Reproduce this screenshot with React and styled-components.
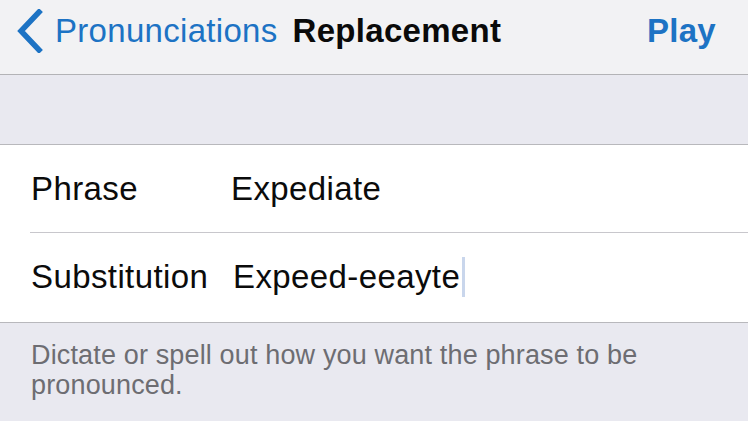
import styled, { createGlobalStyle } from "styled-components";

const GlobalStyle = createGlobalStyle`
    html, body {
        margin: 0;
        padding: 0;
        background-color: #e9e9f0;
    }
    body {
        font-family: "Liberation Sans", Arial, sans-serif;
        -webkit-font-smoothing: antialiased;
    }
`;

const Screen = styled.div`
    width: 748px;
    height: 421px;
    overflow: hidden;
    background-color: #e9e9f0;
    display: flex;
    flex-direction: column;
`;

const NavBar = styled.div`
    height: 75px;
    box-sizing: border-box;
    flex-shrink: 0;
    display: flex;
    align-items: center;
    padding: 0 32px 13px 16px;
    background-color: #f2f2f4;
    border-bottom: 1px solid #b3b3b6;
    font-size: 33px;
    letter-spacing: 0.3px;
`;

const BackButton = styled.div`
    display: flex;
    align-items: center;
    gap: 12px;
    color: #1d73c4;
`;

const Title = styled.div`
    margin-left: 15px;
    font-weight: bold;
    color: #0a0a0a;
    flex: 1;
`;

const Action = styled.div`
    font-weight: bold;
    color: #1d73c4;
`;

const Spacer = styled.div`
    height: 69px;
    flex-shrink: 0;
    border-bottom: 1px solid #b8b8bc;
`;

const Group = styled.div`
    background-color: #ffffff;
    padding-bottom: 1px;
    border-bottom: 1px solid #b8b8bc;
`;

const Row = styled.div`
    height: 88px;
    display: flex;
    align-items: center;
    padding-left: 31px;
    font-size: 33px;
    letter-spacing: 0.4px;
    color: #0b0b0b;
    position: relative;
    ${(props) =>
        props.divided &&
        `
        &::after {
            content: "";
            position: absolute;
            left: 30px;
            right: 0;
            bottom: 0;
            height: 1px;
            background-color: #c8c7cc;
        }
    `}
`;

const Label = styled.div`
    width: 200px;
    flex-shrink: 0;
`;

const Value = styled.div`
    display: flex;
    align-items: center;
    padding-left: ${(props) => props.offset || 0}px;
`;

const Caret = styled.span`
    display: inline-block;
    width: 3px;
    height: 40px;
    margin-left: 2px;
    background-color: #c9d6ec;
`;

const Footer = styled.div`
    padding: 17px 40px 0 31px;
    font-size: 27px;
    line-height: 30px;
    color: #6d6d72;
    letter-spacing: 0.15px;
`;

function Chevron() {
    return (
        <svg width="27" height="44" viewBox="0 0 27 44">
            <path d="M23 3 L5 22 L23 41" fill="none" stroke="#1d73c4" strokeWidth="5.5" strokeLinecap="square" />
        </svg>
    );
}

export default function App() {
    return (
        <Screen>
            <GlobalStyle />
            <NavBar>
                <BackButton>
                    <Chevron />
                    <span>Pronunciations</span>
                </BackButton>
                <Title>Replacement</Title>
                <Action>Play</Action>
            </NavBar>
            <Spacer />
            <Group>
                <Row divided>
                    <Label>Phrase</Label>
                    <Value>Expediate</Value>
                </Row>
                <Row>
                    <Label>Substitution</Label>
                    <Value offset={2}>
                        Expeed-eeayte
                        <Caret />
                    </Value>
                </Row>
            </Group>
            <Footer>Dictate or spell out how you want the phrase to be pronounced.</Footer>
        </Screen>
    );
}
